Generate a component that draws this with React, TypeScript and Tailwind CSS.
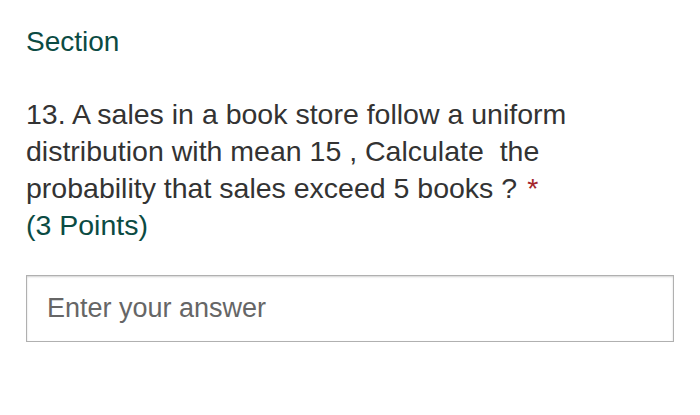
import React, { useState } from 'react';

export default function App() {
  const [answer, setAnswer] = useState('');

  return (
    <div
      className="min-h-screen w-full bg-white px-[26px] pt-[23px]"
      style={{ fontFamily: '"Liberation Sans", Arial, sans-serif' }}
    >
      <h2 className="text-[28px] leading-[37px] font-normal text-[#0b4b43]">Section</h2>

      <div className="mt-[36px] text-[28.5px] leading-[37px] text-[#333333]">
        <div>
          <span>13.</span>
          <span>
            {' '}A sales in a book store follow a uniform distribution with mean 15 , Calculate{'\u00a0'} the
            <br />
            probability that sales exceed 5 books ?
          </span>
          <span className="ml-[10px] text-[#a4262c]">*</span>
        </div>
        <div className="text-[#0b4b43]">(3 Points)</div>
      </div>

      <div className="mt-[31px]">
        <input
          type="text"
          value={answer}
          onChange={(e) => setAnswer(e.target.value)}
          placeholder="Enter your answer"
          className="h-[67px] w-full border border-[#b0b0b0] bg-white pl-[20px] pr-4 text-[27px] text-[#333333] placeholder-[#666666] shadow-[inset_0_1px_2px_rgba(0,0,0,0.18)] outline-none"
          style={{ fontFamily: '"Liberation Sans", Arial, sans-serif' }}
        />
      </div>
    </div>
  );
}
